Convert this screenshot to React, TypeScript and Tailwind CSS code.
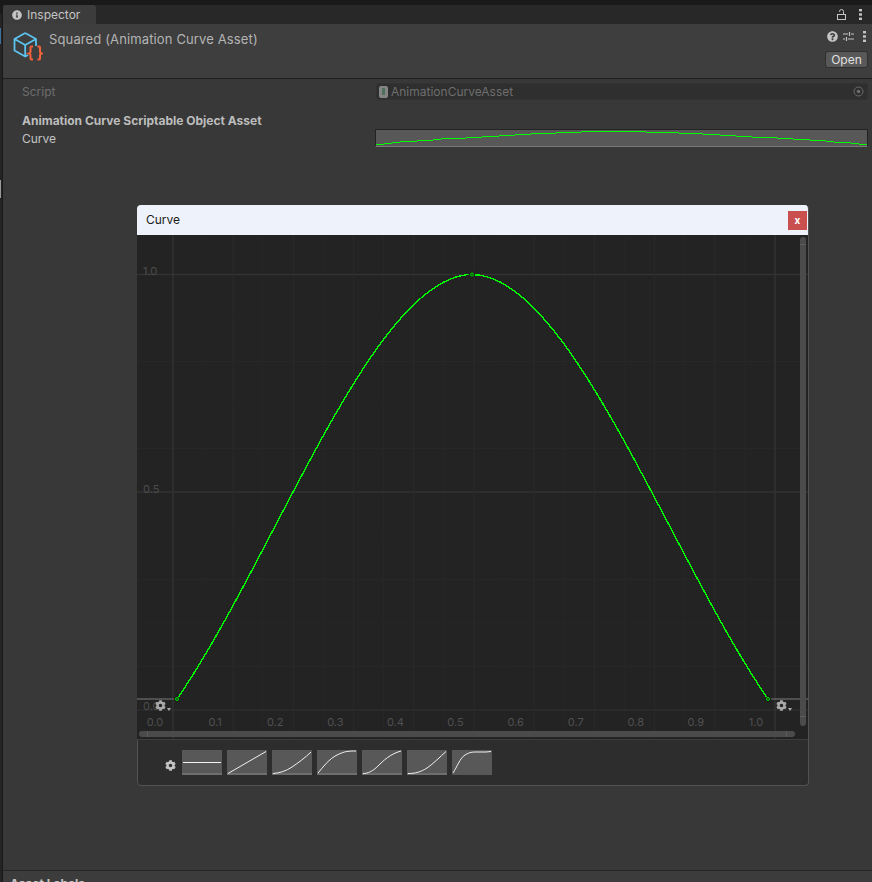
import React from 'react';
import { FaCog, FaInfoCircle, FaQuestionCircle } from 'react-icons/fa';

const FONT = 'font-["Inter","Noto_Sans",sans-serif]';

const Kebab: React.FC<{ className?: string }> = ({ className }) => (
  <svg width="3" height="13" viewBox="0 0 3 13" className={className}>
    <rect x="0" y="1" width="3" height="2.4" fill="#c4c4c4" />
    <rect x="0" y="5.3" width="3" height="2.4" fill="#c4c4c4" />
    <rect x="0" y="9.6" width="3" height="2.4" fill="#c4c4c4" />
  </svg>
);

const CubeIcon = () => (
  <svg width="30" height="30" viewBox="0 0 30 30" fill="none">
    <path d="M12.200 1 23 7V14M12.200 1 1.500 7V18.500L12.200 24.500 15 23M1.500 7 12.200 13V24.500M12.200 13 23 7" stroke="#5cc3ef" strokeWidth="1.800" strokeLinejoin="round" />
    <path d="M20 14.500H18.500Q17.500 14.500 17.500 15.500V19.500Q17.500 21 16 21.500 17.500 22 17.500 23.500V26.500Q17.500 27.500 18.500 27.500H20" stroke="#f0623a" strokeWidth="2.100" />
    <path d="M24.500 14.500H26Q27 14.500 27 15.500V19.500Q27 21 28.500 21.500 27 22 27 23.500V26.500Q27 27.500 26 27.500H24.500" stroke="#f0623a" strokeWidth="2.100" />
  </svg>
);

// the strip in the Curve field
const miniCurve = () => {
  const pts: string[] = [];
  for (let i = 0; i <= 60; i++) {
    const x = (i / 60) * 492;
    const u = Math.abs(x - 237) / (x < 237 ? 237 : 255);
    const y = Math.round(1 + 13.5 * Math.pow(u, 1.5));
    pts.push(`${x.toFixed(1)},${y}`);
  }
  return pts.join(' ');
};

// tile curves, drawn in a 40x25 box
const TILES = [
  'M1 12.500H39',
  'M1 23.500 39 1.500',
  'M1 23.500C8 23 14 21 20 17S34 7 39 2',
  'M1 23C6 17 12 9 20 5S32 1 39 1',
  'M1 23.500C6 23.500 11 21 16 16S28 4 39 1',
  'M1 23.500C8 23.500 14 22 20 18S34 6 39 1.500',
  'M1 23C5 17 8 8 13 5S20 2 26 2H34L39 1.500',
];

const XLABELS = ['0.0', '0.1', '0.2', '0.3', '0.4', '0.5', '0.6', '0.7', '0.8', '0.9', '1.0'];

const CurveCanvas = () => {
  // origin of the svg sits at the top left of the canvas (137, 235 on the page)
  const majorX = XLABELS.map((_, i) => 36 + i * 60.2);
  const minorX = XLABELS.slice(0, 10).map((_, i) => 66 + i * 60.2);
  const gridY = [39.5, 83, 126.5, 170, 213.5, 257, 301, 344.5, 388, 431.5, 475];

  return (
    <svg width="671" height="504" viewBox="0 0 671 504" className="block">
      {minorX.map((x) => (
        <line key={x} x1={x} x2={x} y1="0" y2="504" stroke="#272727" />
      ))}
      {gridY.map((y, i) => (
        <line key={y} x1="0" x2="671" y1={y} y2={y} stroke={i === 0 || i === 5 || i === 10 ? '#333333' : '#272727'} strokeWidth={i === 0 || i === 5 ? 1.5 : 1} />
      ))}
      {majorX.map((x, i) => (
        <line key={x} x1={x} x2={x} y1="0" y2="504" stroke={i === 0 || i === 10 ? '#333333' : '#2b2b2b'} strokeWidth={i === 0 || i === 10 ? 1.5 : 1} />
      ))}
      <text x="6" y="40" fontSize="11" fill="#4d4d4d">1.0</text>
      <text x="6" y="258" fontSize="11" fill="#4d4d4d">0.5</text>
      <text x="6" y="475" fontSize="11" fill="#4d4d4d">0.0</text>
      {XLABELS.map((l, i) => (
        <text key={l} x={18 + i * 60.1} y="491" fontSize="11" textAnchor="middle" fill="#505050">{l}</text>
      ))}
      {/* wrap lines outside the key range */}
      <line x1="0" x2="40" y1="464" y2="464" stroke="#5f5f5f" strokeWidth="1.5" />
      <line x1="631" x2="671" y1="464" y2="464" stroke="#5f5f5f" strokeWidth="1.5" />
      <path
        d="M40 464C138 322 237 39.500 335 39.500S533 322 631 464"
        fill="none"
        stroke="#00ff00"
        strokeWidth="1.400"
        shapeRendering="crispEdges"
      />
      {[[40, 464], [335, 39.5], [631, 464]].map(([x, y]) => (
        <g key={x}>
          <path d={`M${x - 3.5} ${y}L${x} ${y - 3.5}L${x + 3.5} ${y}L${x} ${y + 3.5}Z`} fill="#161616" />
          <circle cx={x} cy={y} r="1.6" fill="#0a5c0a" stroke="#00e000" strokeWidth="0.9" />
        </g>
      ))}
      {/* scrollbars */}
      <rect x="2" y="496" width="656" height="6" rx="3" fill="#4b4b4b" />
      <line x1="10.500" x2="10.500" y1="496" y2="502" stroke="#5c5c5c" />
      <line x1="649.500" x2="649.500" y1="496" y2="502" stroke="#5c5c5c" />
      <rect x="663" y="2" width="6" height="489" rx="3" fill="#4b4b4b" />
      <line x1="663" x2="669" y1="9.500" y2="9.500" stroke="#5c5c5c" />
      <line x1="663" x2="669" y1="481.500" y2="481.500" stroke="#5c5c5c" />
    </svg>
  );
};

const KeyGear: React.FC<{ className: string }> = ({ className }) => (
  <div className={`absolute top-[465px] flex items-end text-[#a9a9a9] ${className}`}>
    <FaCog size={11} />
    <span className="ml-[0.5px] h-0 w-0 border-x-[2.5px] border-t-[3px] border-x-transparent border-t-[#a9a9a9]" />
  </div>
);

export default function App() {
  return (
    <div className={`${FONT} relative flex h-[882px] w-[872px] flex-col overflow-hidden bg-[#191919] pl-[3px] pt-[5px] text-[12px] text-[#c4c4c4]`}>
      {/* neighbouring window showing at the left edge */}
      <div className="absolute bottom-0 left-0 top-[14px] w-[2px] bg-[#242424]" />
      <div className="absolute left-0 top-[28px] h-[16px] w-[1px] bg-[#3f6f9c]" />
      <div className="absolute left-0 top-[180px] h-[18px] w-[1px] bg-[#9a9a9a]" />

      {/* tab strip */}
      <div className="flex h-[19px] shrink-0 items-stretch justify-between bg-[#282828]">
        <div className="flex w-[93px] items-center gap-[5px] rounded-t-[3px] bg-[#3c3c3c] pl-[9px]">
          <FaInfoCircle size={10} className="text-[#c4c4c4]" />
          <span className="text-[12px]">Inspector</span>
        </div>
        <div className="flex items-center gap-[13px] pr-[10px]">
          <svg width="9" height="11" viewBox="0 0 9 11" fill="none" stroke="#c4c4c4">
            <path d="M2.500 3V2.500A2 2 0 0 1 6.500 2.500V5.500" />
            <rect x="0.5" y="5.500" width="8" height="5" />
          </svg>
          <Kebab />
        </div>
      </div>

      {/* asset header */}
      <div className="flex h-[55px] shrink-0 justify-between border-b border-[#1e1e1e] bg-[#3e3e3e] pr-[4px]">
        <div className="flex pl-[10px] pt-[8px]">
          <CubeIcon />
          <span className="ml-[6px] mt-[-2px] text-[13px] tracking-[0.13px] text-[#b4b4b4]">Squared (Animation Curve Asset)</span>
        </div>
        <div className="flex flex-col items-end pt-[6px]">
          <div className="flex items-center gap-[6px] pr-[2px]">
            <FaQuestionCircle size={11} className="mr-[-1px] text-[#c4c4c4]" />
            <svg width="11" height="11" viewBox="0 0 11 11" stroke="#c4c4c4" strokeWidth="1.2">
              <path d="M0 3h5M8 3h3M6.500 1v4M0 8h2M5 8h6M3.500 6v4" />
            </svg>
            <Kebab className="ml-[3px]" />
          </div>
          <button className="mt-[8px] flex h-[17px] w-[43px] items-center justify-center rounded-[3px] border border-[#303030] bg-[#585858] text-[12px] leading-none text-[#e0e0e0]">
            Open
          </button>
        </div>
      </div>

      {/* inspector body */}
      <div className="flex min-h-0 flex-1 flex-col bg-[#383838] pl-[19px] pr-[4px] pt-[4px]">
        <div className="flex h-[17px] items-center justify-between">
          <span className="text-[#6e6e6e]">Script</span>
          <div className="flex h-[17px] w-[492px] items-center rounded-[3px] border border-[#323232] bg-[#2f2f2f] pl-[2px] pr-[3px] text-[#6e6e6e]">
            <span className="flex h-[12px] w-[9px] items-center justify-center rounded-[2px] bg-[#858585]">
              <span className="h-[7px] w-[3px] bg-[#4f6e5c]" />
            </span>
            <span className="ml-[3px] flex-1">AnimationCurveAsset</span>
            <svg width="11" height="11" viewBox="0 0 11 11" fill="none">
              <circle cx="5.5" cy="5.5" r="4.500" stroke="#6c6c6c" />
              <circle cx="5.5" cy="5.5" r="1.8" fill="#6c6c6c" />
            </svg>
          </div>
        </div>
        <div className="mt-[13px] text-[12px] font-bold leading-[16px] text-[#bdbdbd]">Animation Curve Scriptable Object Asset</div>
        <div className="flex h-[17px] items-center justify-between">
          <span className="mt-[2px]">Curve</span>
          <div className="h-[18px] w-[493px] border border-[#232323] border-b-[#7a7a7a] bg-[#585858]">
            <svg width="491" height="16" viewBox="0 0 492 16" shapeRendering="crispEdges" className="block">
              <polyline points={miniCurve()} fill="none" stroke="#00ff00" strokeWidth="1" />
            </svg>
          </div>
        </div>
      </div>

      {/* asset labels, cut off by the window edge */}
      <div className="h-[12px] shrink-0 border-t border-[#262626] bg-[#3c3c3c] pl-[7px] pt-[5px] text-[12px] font-bold leading-[15px] text-[#c4c4c4]">
        Asset Labels
      </div>

      {/* curve editor window */}
      <div className="absolute left-[137px] top-[205px] flex h-[581px] w-[672px] flex-col overflow-hidden rounded-[4px] border-b border-r border-[#525252] bg-[#2d2d2d]">
        <div className="flex h-[30px] shrink-0 items-center justify-between bg-[#eef3fb] pl-[9px] pr-[1px] text-[12px] text-[#1a1a1a]">
          <span>Curve</span>
          <div className="flex h-[19px] w-[19px] items-center justify-center bg-[#c9504f] text-[10px] font-bold leading-none text-white">x</div>
        </div>
        <div className="relative h-[505px] shrink-0 border-b border-[#3d3d3d] bg-[#232323]">
          <CurveCanvas />
          <KeyGear className="left-[18px]" />
          <KeyGear className="left-[639px]" />
        </div>
        <div className="flex flex-1 items-start rounded-bl-[4px] border-l border-[#525252] pl-[27px] pt-[10px]">
          <FaCog size={11} className="mt-[10px] text-[#c4c4c4]" />
          <div className="ml-[6px] flex gap-[5px]">
            {TILES.map((d, i) => (
              <div key={i} className={`h-[25px] w-[40px] bg-[#585858] ${i === 6 ? '' : 'border-b-2 border-[#6e6e6e]'}`}>
                <svg width="40" height="25" viewBox="0 0 40 25" className="block" fill="none">
                  <path d={d} stroke="#f2f2f2" strokeWidth="1" />
                </svg>
              </div>
            ))}
          </div>
        </div>
      </div>
    </div>
  );
}
